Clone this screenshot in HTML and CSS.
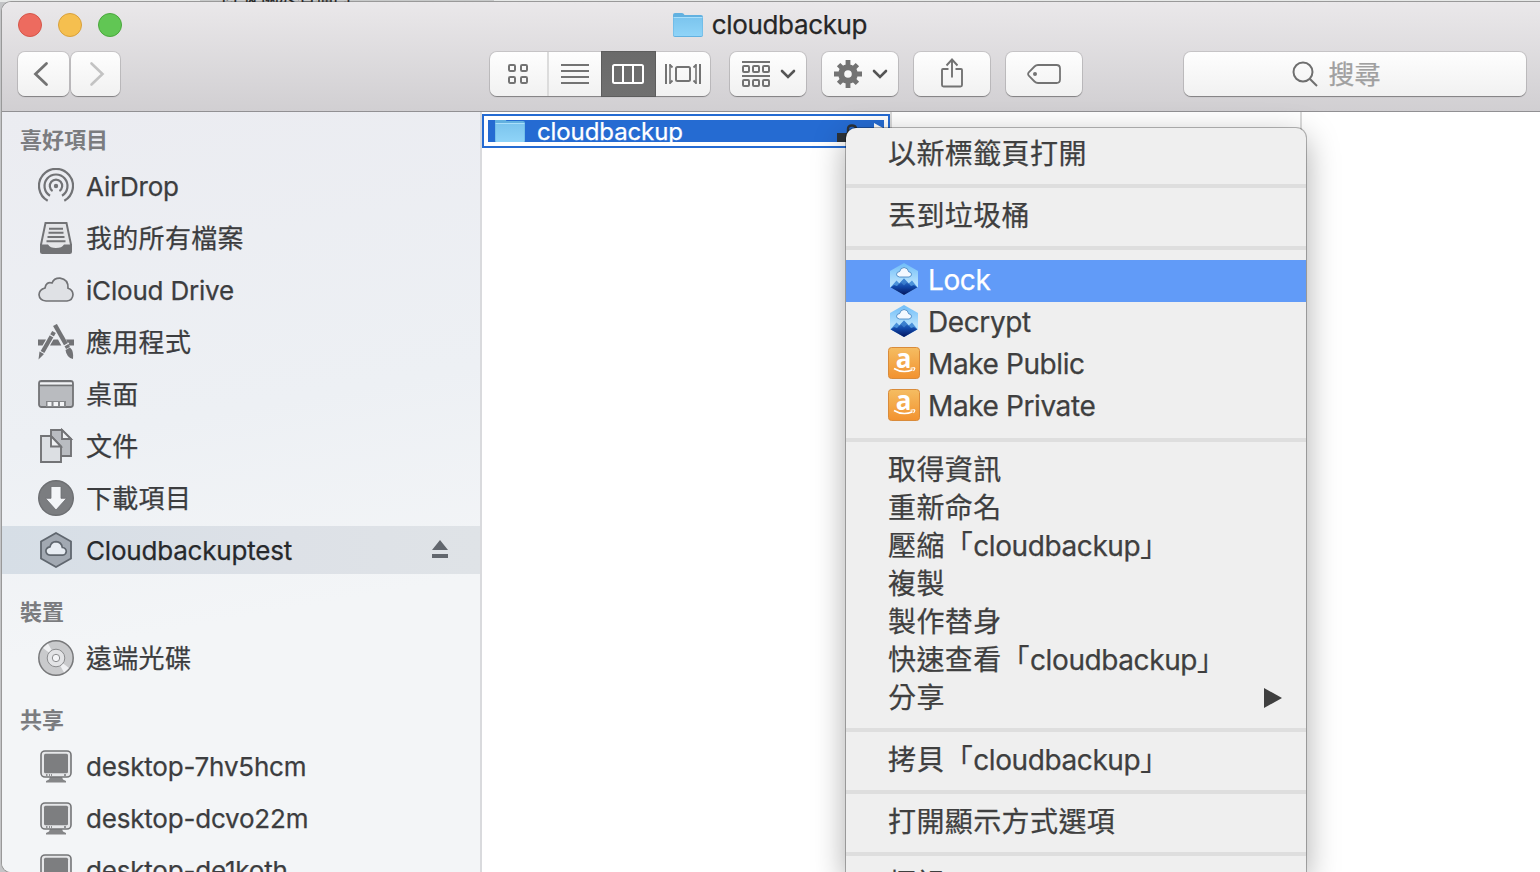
FILE: index.html
```html
<!DOCTYPE html>
<html lang="zh-Hant">
<head>
<meta charset="utf-8">
<title>cloudbackup</title>
<link rel="stylesheet" href="styles.css">
</head>
<body>
<svg class="defs" width="0" height="0" aria-hidden="true">
  <defs>
    <linearGradient id="folderFill" x1="0" y1="0" x2="0" y2="1"><stop offset="0" stop-color="#7cc5ee"/><stop offset="1" stop-color="#8fd4f8"/></linearGradient>
    <linearGradient id="sky" x1="0" y1="0" x2="0" y2="1"><stop offset="0" stop-color="#6fbdf8"/><stop offset=".6" stop-color="#b4e0fd"/></linearGradient>
    <linearGradient id="peak" x1="0" y1="0" x2="0" y2="1"><stop offset="0" stop-color="#3c7fd0"/><stop offset=".5" stop-color="#1148a8"/><stop offset="1" stop-color="#04155e"/></linearGradient>
    <linearGradient id="orange" x1="0" y1="0" x2="0" y2="1"><stop offset="0" stop-color="#f5bd62"/><stop offset="1" stop-color="#f2922f"/></linearGradient>
  </defs>
  <symbol id="folder" viewBox="0 0 30 26">
    <path d="M0 3Q0 1 2 1H9Q10.500 1 11.500 3H28Q30 3 30 5V23Q30 25 28 25H2Q0 25 0 23Z" fill="#62b1e0"/>
    <path d="M.5 6H29.500V22.500Q29.500 24 28 24H2Q.5 24 .5 22.500Z" fill="url(#folderFill)"/>
    <path d="M.5 5.500H29.500" stroke="#a9dffb"/>
  </symbol>
  <symbol id="monitor" viewBox="0 0 36 36">
    <path d="M12 29H24L25 31.500L28 33V34.600H8V33L11 31.500Z" fill="#858688"/>
    <rect x="3" y="3" width="30" height="26" rx="4" fill="#e6e7e9" stroke="#747577" stroke-width="1.600"/>
    <rect x="6" y="5.700" width="24" height="19.600" rx="1.500" fill="#7d7e80"/>
    <path d="M8 27H9.500M11 27H12M13 27H14M26 27H28" stroke="#747577" stroke-width="1.400"/>
  </symbol>
  <symbol id="hexapp" viewBox="0 0 32 32">
    <clipPath id="hexclip"><path d="M16 0L30 8V24L16 32L2 24V8Z"/></clipPath>
    <g clip-path="url(#hexclip)">
      <rect width="32" height="32" fill="url(#sky)"/>
      <path d="M2 25L8.500 17.500L12 21L16 16L20 21L24 17.500L30 25V32H2Z" fill="#4a91da"/>
      <path d="M2 25L6 22L9 23L16 15.500L23 23L26 22L30 25V32H2Z" fill="url(#peak)"/>
      <path d="M11 20.500L16 15.500L21 20.500L18.500 20L16 22.500L13.500 20Z" fill="#438bd5" opacity=".65"/>
    </g>
    <path d="M11.500 14H21Q23.500 13.500 23.500 11.200Q23.300 8.900 20.700 8.800Q20 4.700 16.100 4.500Q12.400 4.700 11.700 8.500Q8.700 8.800 8.500 11.300Q8.700 13.700 11.500 14Z" fill="#f3f8ff" stroke="#3b7cbb" stroke-width=".8"/>
  </symbol>
  <symbol id="amazon" viewBox="0 0 32 32">
    <rect x=".5" y=".5" width="31" height="31" rx="3" fill="url(#orange)" stroke="#d98b3a"/>
    <text x="15.700" y="20.500" class="amazon-letter" text-anchor="middle">a</text>
    <path d="M6 21.500Q15 27 24.500 22.800" fill="none" stroke="#fff" stroke-width="1.500"/>
    <path d="M22.500 21.200Q28 20 26.500 22.200L25.500 24" fill="none" stroke="#fff" stroke-width="1.100"/>
  </symbol>
  <symbol id="chevron" viewBox="0 0 16 10"><path d="M2 2L8 8L14 2" fill="none" stroke="#555" stroke-width="2.600" stroke-linecap="round"/></symbol>
</svg>

<div class="backdrop"><span class="backdrop-tab">何 從關於右檔內</span></div>

<div class="window">
  <header class="chrome">
    <div class="titlebar">
      <div class="lights"><i class="light red"></i><i class="light yellow"></i><i class="light green"></i></div>
      <div class="title"><svg class="title-folder"><use href="#folder"/></svg><span class="title-text">cloudbackup</span></div>
      <div class="title-spacer"></div>
    </div>
    <div class="toolbar">
      <div class="nav">
        <button class="btn back"><svg width="16" height="28" viewBox="0 0 16 28"><path d="M13.500 3.500L2.500 14L13.500 24.500" fill="none" stroke="#737373" stroke-width="2.800" stroke-linecap="round"/></svg></button>
        <button class="btn forward"><svg width="16" height="28" viewBox="0 0 16 28"><path d="M2.500 3.500L13.500 14L2.500 24.500" fill="none" stroke="#c3c3c3" stroke-width="2.600" stroke-linecap="round"/></svg></button>
      </div>
      <div class="btn segments">
        <span class="seg seg-icons"><svg width="20" height="20" viewBox="0 0 20 20"><g fill="none" stroke="#737373" stroke-width="2"><rect x="1" y="1" width="6" height="6" rx="1.200"/><rect x="13" y="1" width="6" height="6" rx="1.200"/><rect x="1" y="13" width="6" height="6" rx="1.200"/><rect x="13" y="13" width="6" height="6" rx="1.200"/></g></svg></span>
        <span class="seg seg-list"><svg width="28" height="20" viewBox="0 0 28 20"><path d="M0 1H28M0 7H28M0 13H28M0 19H28" stroke="#737373" stroke-width="2"/></svg></span>
        <span class="seg seg-columns"><svg width="32" height="20" viewBox="0 0 32 20"><g fill="none" stroke="#fff" stroke-width="2"><rect x="1" y="1" width="30" height="18" rx="1.500"/><path d="M11 1V19M21 1V19"/></g></svg></span>
        <span class="seg seg-flow"><svg width="36" height="20" viewBox="0 0 36 20"><g fill="none" stroke="#737373" stroke-width="2"><path d="M1 0V20M35 0V20"/><path d="M5 0V20M31 0V20" stroke-width="1.600"/><path d="M5 1L7.500 3.500M5 19L7.500 16.500M31 1L28.500 3.500M31 19L28.500 16.500" stroke-width="1.800"/><rect x="11" y="3" width="14" height="14" rx="1.500"/></g></svg></span>
      </div>
      <div class="btn menu-btn"><svg width="28" height="26" viewBox="0 0 28 26"><g fill="none" stroke="#737373" stroke-width="2"><path d="M0 1H28M0 15H28"/><rect x="1" y="5" width="6" height="6" rx="1"/><rect x="11" y="5" width="6" height="6" rx="1"/><rect x="21" y="5" width="6" height="6" rx="1"/><rect x="1" y="19" width="6" height="6" rx="1"/><rect x="11" y="19" width="6" height="6" rx="1"/><rect x="21" y="19" width="6" height="6" rx="1"/></g></svg><svg class="chevron"><use href="#chevron"/></svg></div>
      <div class="btn menu-btn"><svg width="28" height="28" viewBox="-14 -14 28 28"><g stroke="#737373" stroke-width="4.800"><path d="M0 -14V-6M0 14V6M-14 0H-6M14 0H6"/><path d="M-9.400 -9.400L-5 -5M9.400 9.400L5 5M-9.400 9.400L-5 5M9.400 -9.400L5 -5"/></g><circle r="6.800" fill="none" stroke="#737373" stroke-width="6"/></svg><svg class="chevron"><use href="#chevron"/></svg></div>
      <div class="btn icon-btn"><svg width="24" height="30" viewBox="0 0 24 30"><g fill="none" stroke="#737373" stroke-width="1.900"><path d="M8.500 11H3Q2 11 2 12V27Q2 28.500 3.500 28.500H20.500Q22 28.500 22 27V12Q22 11 21 11H15.500"/><path d="M12 19.500V2M6.500 7.500L12 1.500L17.500 7.500"/></g></svg></div>
      <div class="btn icon-btn tag"><svg width="34" height="20" viewBox="0 0 34 20"><path d="M11 1H29.500Q33 1 33 4.500V15.500Q33 19 29.500 19H11Q9 19 7.500 17.500L2 12Q.2 10 2 8L7.500 2.500Q9 1 11 1Z" fill="none" stroke="#737373" stroke-width="1.800"/><circle cx="8" cy="10" r="2" fill="#737373"/></svg></div>
      <div class="btn search"><svg width="26" height="26" viewBox="0 0 26 26"><g fill="none" stroke="#6f6f6f" stroke-width="2"><circle cx="11" cy="11" r="9.500"/><path d="M17.700 17.700L25 25"/></g></svg><span class="search-text">搜尋</span></div>
    </div>
  </header>

  <div class="content">
    <nav class="sidebar">
      <h2 class="group">喜好項目</h2>
      <div class="item"><svg class="icon" viewBox="0 0 36 36"><g fill="none" stroke="#727376" stroke-width="2.200"><path d="M9.700 32.700A17 17 0 1 1 26.300 32.700"/><path d="M12 27.800A11.500 11.500 0 1 1 24 27.800"/><path d="M14.600 23A6.200 6.200 0 1 1 21.400 23"/></g><circle cx="18" cy="18" r="2.200" fill="#727376"/></svg><span class="latin">AirDrop</span></div>
      <div class="item"><svg class="icon" viewBox="0 0 36 36"><path d="M7.500 3H28.500L33 24.500V31.500Q33 33 31.500 33H4.500Q3 33 3 31.500V24.500Z" fill="#e4e5e8" stroke="#727376" stroke-width="2"/><path d="M3 24.500H10Q12 28 18 28Q24 28 26 24.500H33V33H3Z" fill="#727376"/><path d="M11 8.800H25M10.500 12.800H25.500M9.500 17H26.500M8.500 21.200H27.500" stroke="#727376" stroke-width="1.900"/></svg>我的所有檔案</div>
      <div class="item"><svg class="icon" viewBox="0 0 36 36"><path d="M8 29H29Q34.600 28.500 35 22.500Q34.700 17.500 30 16.200Q30.500 7.500 22 6.200Q16 6 14 11Q8 9.500 7 16Q1.200 17.500 1 22.800Q1.500 28.500 8 29Z" fill="#dfe1e5" stroke="#727376" stroke-width="1.700"/></svg><span class="latin">iCloud Drive</span></div>
      <div class="item"><svg class="icon" viewBox="0 0 36 36"><path d="M0 15.500H8L4.500 21.500H0ZM15.500 15.500H20L23.300 21.500H12ZM28 15.500H36V21.500H31Z" fill="#727376"/><path d="M17 1L30 24" stroke="#727376" stroke-width="4.400"/><path d="M16 8L4.500 28" stroke="#727376" stroke-width="4.200"/><path d="M11.500 10.500L16.500 13.500M26 22L31 19" stroke="#eceef2" stroke-width="1.200"/><path d="M1.500 27.500L6 30L.5 35.500ZM27.500 26L32 23.500Q36 27 35 35Q28.500 33.500 27.500 26Z" fill="#727376"/></svg>應用程式</div>
      <div class="item"><svg class="icon" viewBox="0 0 36 36"><rect x="1" y="5" width="34" height="26" rx="2.500" fill="#b9bbbf" stroke="#727376" stroke-width="1.800"/><path d="M2 6.500H34V8.500H2Z" fill="#f2f3f5"/><path d="M1 9.500H35" stroke="#727376" stroke-width="1.700"/><path d="M8 25H28V31H8Z" fill="#85878a"/><path d="M9.500 26H13.500V30H9.500ZM15.500 26H20V30H15.500ZM22 26H26V30H22Z" fill="#f4f5f7"/></svg>桌面</div>
      <div class="item"><svg class="icon" viewBox="0 0 36 36"><g stroke="#727376" stroke-width="1.900"><path d="M13 2H24L33 11V28H13Z" fill="#b9bcc1"/><path d="M24 2V11H33Z" fill="#eff1f3"/><path d="M3 8H13L23 18.500V34H3Z" fill="#dcdfe3"/><path d="M13 8V18.500H23Z" fill="#eff1f3"/></g></svg>文件</div>
      <div class="item"><svg class="icon" viewBox="0 0 36 36"><circle cx="18" cy="18" r="17.300" fill="#7b7d80" stroke="#6d6f72" stroke-width="1.400"/><path d="M13 6.500H23V18.300H28.500L18 30L7.500 18.300H13Z" fill="#f3f5f8" stroke="#6d6f72" stroke-width=".8"/></svg>下載項目</div>
      <div class="item selected"><svg class="icon" viewBox="0 0 36 36"><path d="M18 1L33 9.500V26.500L18 35L3 26.500V9.500Z" fill="#a2a9b2" stroke="#60676f" stroke-width="1.800"/><path d="M12 23.200H24.500Q28 22.700 28.300 19.500Q28.200 16 24.300 15.500Q23.500 10 18 9.700Q13 10 12 14.800Q8 15.500 7.900 19Q8.200 22.700 12 23.200Z" fill="#e8edf3" stroke="#60676f" stroke-width="1.700"/></svg><span class="latin">Cloudbackuptest</span><svg class="eject" width="16" height="18" viewBox="0 0 16 18"><path d="M8 0L16 10H0ZM0 14H16V18H0Z" fill="#62676e"/></svg></div>
      <h2 class="group">裝置</h2>
      <div class="item"><svg class="icon" viewBox="0 0 36 36"><circle cx="18" cy="18" r="17.200" fill="#c9cacc" stroke="#77787a" stroke-width="1.500"/><path d="M18 18L5 8L10 3.500ZM18 18L31 28L26 32.500Z" fill="#f0f1f3"/><circle cx="18" cy="18" r="8.800" fill="#e3e4e6" stroke="#8b8c8e" stroke-width="1"/><circle cx="18" cy="18" r="3.700" fill="#f4f5f7" stroke="#8b8c8e" stroke-width="1"/></svg>遠端光碟</div>
      <h2 class="group">共享</h2>
      <div class="item"><svg class="icon"><use href="#monitor"/></svg><span class="latin">desktop-7hv5hcm</span></div>
      <div class="item"><svg class="icon"><use href="#monitor"/></svg><span class="latin">desktop-dcvo22m</span></div>
      <div class="item"><svg class="icon"><use href="#monitor"/></svg><span class="latin">desktop-de1koth</span></div>
    </nav>
    <main class="columns">
      <section class="column first">
        <div class="drop-target">
          <div class="row"><svg class="row-folder"><use href="#folder"/></svg><span class="row-name">cloudbackup</span><svg class="row-lock" width="20" height="18" viewBox="0 0 20 18"><path d="M0 9H18V18H0Z" fill="#2c3238"/><path d="M11 10V5Q11 1.500 15 1.500Q19 1.500 19 5V9" fill="none" stroke="#2c3238" stroke-width="2.400"/></svg><svg class="row-arrow" width="12" height="18" viewBox="0 0 12 18"><path d="M0 0L12 6.500L0 14Z" fill="#fff"/></svg></div>
        </div>
      </section>
      <section class="column second"></section>
      <section class="column third"></section>
    </main>
  </div>
</div>

<div class="menu">
  <div class="entry">以新標籤頁打開</div>
  <hr>
  <div class="entry">丟到垃圾桶</div>
  <hr>
  <div class="entry app active"><svg class="app-icon"><use href="#hexapp"/></svg><span class="latin">Lock</span></div>
  <div class="entry app"><svg class="app-icon"><use href="#hexapp"/></svg><span class="latin">Decrypt</span></div>
  <div class="entry app"><svg class="app-icon"><use href="#amazon"/></svg><span class="latin">Make Public</span></div>
  <div class="entry app"><svg class="app-icon"><use href="#amazon"/></svg><span class="latin">Make Private</span></div>
  <hr>
  <div class="entry">取得資訊</div>
  <div class="entry">重新命名</div>
  <div class="entry">壓縮「<span class="latin">cloudbackup</span>」</div>
  <div class="entry">複製</div>
  <div class="entry">製作替身</div>
  <div class="entry">快速查看「<span class="latin">cloudbackup</span>」</div>
  <div class="entry">分享<svg class="submenu" width="18" height="20" viewBox="0 0 18 20"><path d="M0 0L18 10L0 20Z" fill="#3f3f3f"/></svg></div>
  <hr>
  <div class="entry">拷貝「<span class="latin">cloudbackup</span>」</div>
  <hr>
  <div class="entry">打開顯示方式選項</div>
  <hr>
  <div class="entry">標記</div>
</div>
</body>
</html>
```
FILE: styles.css
```css
* { box-sizing: border-box; }
html, body { margin: 0; height: 100%; overflow: hidden; }
body {
  position: relative;
  width: 1540px;
  height: 872px;
  background: #c3c4c6;
  font-family: Inter, "Noto Sans CJK TC", sans-serif;
  color: #3c3d3f;
  -webkit-text-stroke: .25px currentColor;
}
svg { display: block; flex: none; }
.defs { position: absolute; }

.backdrop { height: 2px; overflow: hidden; background: #e6e8e7; padding-left: 200px; }
.backdrop-tab {
  display: block; width: 294px; height: 7px; margin-top: -5px; padding-left: 20px;
  background: #c8caca; color: #222; font-size: 18px; line-height: 2px;
}

.window {
  height: 870px; margin-left: 2px; overflow: hidden;
  border-radius: 9px 0 0 9px; background: #fff;
  box-shadow: 0 0 0 1px #999;
}
.chrome {
  height: 110px;
  border-bottom: 1px solid #919093;
  background: linear-gradient(#eae8ea, #d1cfd2);
}
.titlebar { display: flex; justify-content: space-between; align-items: center; height: 45px; }
.lights, .title-spacer { display: flex; width: 150px; gap: 16px; padding-left: 16px; }
.title-spacer { width: 152px; }
.light { width: 24px; height: 24px; border-radius: 50%; border: 1px solid; }
.red { background: #ed6b5f; border-color: #d5564a; }
.yellow { background: #f5bf4f; border-color: #d9a13c; }
.green { background: #61c654; border-color: #4aa73c; }
.title { display: flex; align-items: center; gap: 9px; font-size: 26px; color: #262626; }
.title-folder { width: 30px; height: 26px; }
.title-text { letter-spacing: -.35px; }

.toolbar { display: flex; padding: 5px 14px 0 16px; }
.nav { display: flex; gap: 2px; }
.btn {
  display: flex; align-items: center; justify-content: center;
  height: 44px; margin: 0; padding: 0; border: 0; border-radius: 7px;
  background: linear-gradient(#fefefe, #f1f1f1);
  box-shadow: 0 0 0 1px rgba(0,0,0,.11), 0 1px 1px 0 rgba(0,0,0,.32);
}
.back { width: 51px; padding-right: 6px; }
.forward { width: 49px; padding-left: 3px; }
.segments { width: 220px; margin-left: 370px; justify-content: flex-start; }
.seg { display: flex; align-items: center; justify-content: center; height: 44px; }
.seg-icons { width: 59px; padding-right: 1px; border-right: 2px solid #dcdcdc; }
.seg-list { width: 52px; }
.seg-columns { width: 56px; height: 46px; background: linear-gradient(#6a6a6a, #707070); border: 1px solid #5d5d5d; }
.seg-flow { width: 54px; }
.menu-btn { width: 76px; margin-left: 20px; gap: 10px; padding-left: 2px; }
.menu-btn + .menu-btn { margin-left: 16px; }
.chevron { width: 16px; height: 10px; }
.icon-btn { width: 76px; margin-left: 16px; }
.icon-btn svg { margin-top: -2px; }
.icon-btn.tag svg { margin-top: 0; }
.search { width: 342px; margin-left: auto; gap: 10px; padding: 0 43px 0 6px; font-size: 26px; color: #a0a0a0; }
.search-text { margin-top: -3px; }

.content { display: flex; height: 760px; }
.sidebar {
  flex: none; width: 480px; overflow: hidden; border-right: 2px solid #d9dadd;
  background: linear-gradient(170deg, #ebecf1 0%, #edf0f4 40%, #f3f5f7 65%, #f3f5f7 100%);
}
.group {
  display: flex; align-items: flex-end; height: 54px; margin: 0; padding-left: 18px;
  font-size: 22px; line-height: 40px; font-weight: 700; color: #7b7c7f;
  -webkit-text-stroke: 0;
}
.group:first-child { height: 48px; }
.item {
  display: flex; align-items: center; height: 48px; margin: 2px 0 4px; padding: 2px 0 0 36px;
  font-size: 26px; letter-spacing: .3px; line-height: 46px; white-space: nowrap;
}
.item .latin { letter-spacing: -.2px; }
.icon { width: 36px; height: 36px; margin: -2px 12px 0 0; }
.selected { background: linear-gradient(90deg, #d6dee6, #dde1e7 60%, #dfe3e7); color: #27292c; }
.eject { margin: -4px 32px 0 auto; }

.columns { display: flex; flex: 1; }
.column { height: 760px; background: #fff; }
.first { width: 410px; border-right: 2px solid #dadada; padding-top: 2px; }
.second { width: 410px; border-right: 2px solid #dadada; }
.third { flex: 1; }
.drop-target { width: 408px; height: 34px; padding: 4px; border: 2px solid #256bd2; }
.row {
  display: flex; align-items: center; height: 22px; overflow: hidden; padding-left: 7px;
  background: #256bd2; color: #fff; font-size: 24px;
}
.row-folder { width: 30px; height: 26px; margin-right: 12px; }
.row-name { letter-spacing: -.1px; line-height: 22px; padding-top: 2px; }
.row-lock { margin: 4px 17px 0 auto; }
.row-arrow { margin: 2px -2px 0 0; }

.menu {
  position: absolute; left: 846px; top: 128px; width: 460px; height: 744px; overflow: hidden;
  padding-top: 8px; border-radius: 10px 10px 0 0; background: #efefef;
  box-shadow: 0 0 0 1px rgba(0,0,0,.28), 0 10px 32px rgba(0,0,0,.34);
  color: #3f3f3f; font-size: 28px;
}
.menu hr { height: 4px; margin: 10px 0; border: 0; background: #dedede; }
.entry {
  display: flex; align-items: center; height: 38px; padding: 0 24px 2px 42px;
  letter-spacing: .4px; line-height: 36px; white-space: nowrap;
}
.entry .latin { letter-spacing: -.4px; }
.app { height: 42px; }
.app-icon { width: 32px; height: 32px; margin: -2px 8px 0 0; }
.active { background: #619bf8; color: #fff; }
.submenu { margin-left: auto; }
.amazon-letter { font-family: "Open Sans", sans-serif; font-size: 26px; font-weight: 700; fill: #fff; letter-spacing: 0; -webkit-text-stroke: 0; }
```
